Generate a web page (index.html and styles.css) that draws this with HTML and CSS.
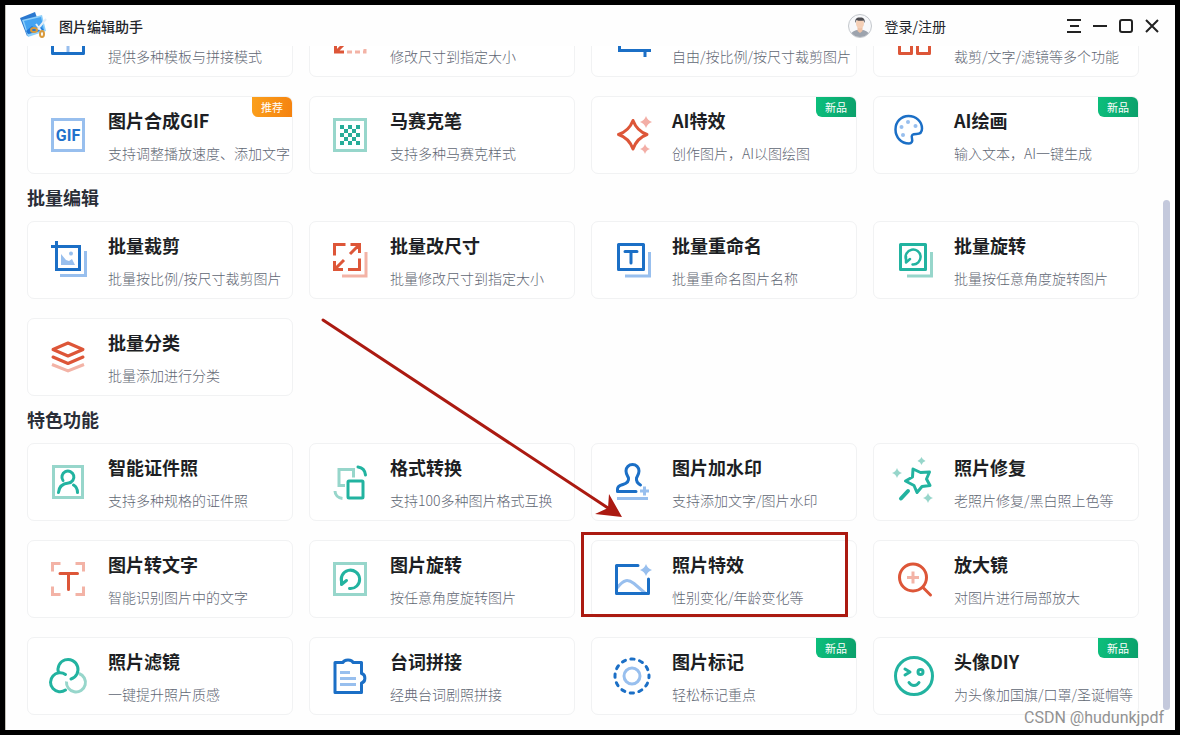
FILE: index.html
```html
<!DOCTYPE html>
<html lang="zh-CN">
<head>
<meta charset="utf-8">
<title>图片编辑助手</title>
<link rel="stylesheet" href="styles.css">
</head>
<body>
<div class="window">
  <header class="titlebar">
    <svg class="logo" viewBox="0 0 28 28" aria-hidden="true">
      <path fill="#2a78cf" d="M0 6L15 0l6 17L7 24z"/>
      <path fill="#8fd0fa" d="M2 8L22 3l4 16L8 25z"/>
      <path fill="#43a3f2" d="M4 9L21 5l3 13L8 22z"/>
      <path fill="#1f77d6" d="M6 19l6-5 4 3 3-4 5 5L8 22z"/>
      <path stroke="#e4edf5" stroke-width="2" d="M26 7l-9 11M16 12l6 8"/>
      <g fill="none" stroke="#d99a3c" stroke-width="2"><ellipse cx="14" cy="18" rx="3" ry="2"/><ellipse cx="22" cy="22" rx="2" ry="3"/></g>
    </svg>
    <h1 class="app-name">图片编辑助手</h1>
    <button class="login" type="button">
      <svg class="avatar" viewBox="0 0 24 24" aria-hidden="true">
        <clipPath id="face"><circle cx="12" cy="12" r="11"/></clipPath>
        <circle cx="12" cy="12" r="11.5" fill="#f7f8fa" stroke="#c3c7cc"/>
        <g clip-path="url(#face)"><path fill="#9da3ad" d="M2 24c0-6 4-7 7-8h6c3 1 7 2 7 8z"/><path fill="#eec2a6" d="M9.500 13h5v4l-2.500 2-2.500-2z"/></g>
        <ellipse cx="12" cy="9.500" rx="4" ry="5" fill="#f4cfb6"/>
        <path fill="#4b4b50" d="M7.500 9c-1-5 2-6 5-5.500 3 0 5 2 4 5.500l-1-2.500c-2 .5-5 .5-7-.5z"/>
      </svg>
      <span>登录/注册</span>
    </button>
    <nav class="controls">
      <button type="button" aria-label="菜单"><svg viewBox="0 0 16 16"><path d="M1 2h14M4 8h9M1 14h14"/></svg></button>
      <button type="button" aria-label="最小化"><svg viewBox="0 0 16 16"><path d="M1 8h14"/></svg></button>
      <button type="button" aria-label="最大化"><svg viewBox="0 0 16 16"><rect x="2" y="2" width="12" height="12" rx="2"/></svg></button>
      <button type="button" aria-label="关闭"><svg viewBox="0 0 16 16"><path d="M2 2l12 12M14 2L2 14"/></svg></button>
    </nav>
  </header>

  <main class="content">
    <section class="group">
      <button class="card untitled" type="button">
        <svg class="icon" viewBox="0 0 44 44"><path class="blue soft" d="M22 12v24"/><path class="blue" d="M6.500 10V37.500H37.500V10z"/></svg>
        <span class="text"><span class="desc">提供多种模板与拼接模式</span></span>
      </button>
      <button class="card untitled" type="button">
        <svg class="icon" viewBox="0 0 44 44"><path class="red sharp" d="M7.500 27v9H16M8 36l8-8"/><path class="red soft" stroke-dasharray="5 3" d="M19 36h18V26"/></svg>
        <span class="text"><span class="desc">修改尺寸到指定大小</span></span>
      </button>
      <button class="card untitled" type="button">
        <svg class="icon" viewBox="0 0 44 44"><path class="blue sharp" d="M9.500 4V34.500H41M35 34v7"/></svg>
        <span class="text"><span class="desc">自由/按比例/按尺寸裁剪图片</span></span>
      </button>
      <button class="card untitled" type="button">
        <svg class="icon" viewBox="0 0 44 44"><path class="red" d="M7.500 22v15.500h12V22M25.500 22v15.500h12V22"/></svg>
        <span class="text"><span class="desc">裁剪/文字/滤镜等多个功能</span></span>
      </button>
      <button class="card" type="button">
        <svg class="icon" viewBox="0 0 44 44"><rect class="blue soft" x="6.500" y="6.500" width="31" height="31"/><text class="gif" x="22" y="28" text-anchor="middle">GIF</text></svg>
        <span class="text"><b class="name">图片合成GIF</b><span class="desc">支持调整播放速度、添加文字</span></span>
        <span class="badge hot">推荐</span>
      </button>
      <button class="card" type="button">
        <svg class="icon" viewBox="0 0 44 44"><rect class="teal soft" x="6.500" y="6.500" width="31" height="31"/><path class="fill-teal" d="M12 12h4v4h-4zM20 12h4v4h-4zM28 12h4v4h-4zM16 16h4v4h-4zM24 16h4v4h-4zM12 20h4v4h-4zM20 20h4v4h-4zM28 20h4v4h-4zM16 24h4v4h-4zM24 24h4v4h-4zM12 28h4v4h-4zM20 28h4v4h-4zM28 28h4v4h-4z"/></svg>
        <span class="text"><b class="name">马赛克笔</b><span class="desc">支持多种马赛克样式</span></span>
      </button>
      <button class="card" type="button">
        <svg class="icon" viewBox="0 0 44 44"><path class="red" d="M23 7.500Q27 18 37 21.500 27 25 23 36 19 25 8.500 21.500 19 18 23 7.500z"/><path class="fill-pink" d="M36 3q1.500 4.500 6 6-4.500 1.500-6 6-1.500-4.500-6-6 4.500-1.500 6-6zM35 31q1.200 3.800 5 5-3.800 1.200-5 5-1.200-3.800-5-5 3.800-1.200 5-5z"/></svg>
        <span class="text"><b class="name">AI特效</b><span class="desc">创作图片，AI以图绘图</span></span>
        <span class="badge">新品</span>
      </button>
      <button class="card" type="button">
        <svg class="icon" viewBox="0 0 44 44"><path class="blue thin" d="M17 30.500C9 30.500 3.500 24 3.500 16.500 3.500 9 9 3 16.500 3S30 8.500 30 15.500c0 4-2.500 5.500-5.500 5.500-4 0-5.500 1-4.500 4.500.8 3-.5 5-3 5z"/><g class="fill-blue-soft"><circle cx="9.500" cy="14" r="2"/><circle cx="16" cy="9" r="2"/><circle cx="23.500" cy="13" r="2"/><circle cx="11" cy="22" r="2"/></g></svg>
        <span class="text"><b class="name">AI绘画</b><span class="desc">输入文本，AI一键生成</span></span>
        <span class="badge">新品</span>
      </button>
    </section>

    <h2 class="heading">批量编辑</h2>
    <section class="group">
      <button class="card" type="button">
        <svg class="icon" viewBox="0 0 44 44"><path class="blue sharp" d="M10.500 3v28.500h23v-23H5"/><path class="blue soft" d="M39.500 13v24.500H14"/><path class="fill-blue-soft" d="M15 16l5 6 3 1 3-2 3 6H15z"/><circle class="fill-blue-soft" cx="25" cy="15.500" r="2"/></svg>
        <span class="text"><b class="name">批量裁剪</b><span class="desc">批量按比例/按尺寸裁剪图片</span></span>
      </button>
      <button class="card" type="button">
        <svg class="icon" viewBox="0 0 44 44"><path class="red sharp" d="M6.500 17.500v-11h11M20 31.500h11.500v-11M22.500 6.500h9V15M31 7l-9 9M6.500 23v8.500H15M7 31l9-9"/><path class="red soft" d="M38 14v24H14"/></svg>
        <span class="text"><b class="name">批量改尺寸</b><span class="desc">批量修改尺寸到指定大小</span></span>
      </button>
      <button class="card" type="button">
        <svg class="icon" viewBox="0 0 44 44"><rect class="blue" x="8.500" y="6.500" width="25" height="25"/><path class="blue" d="M15 13.500h12M21 14v11"/><path class="blue soft" d="M39.500 14v24H15"/></svg>
        <span class="text"><b class="name">批量重命名</b><span class="desc">批量重命名图片名称</span></span>
      </button>
      <button class="card" type="button">
        <svg class="icon" viewBox="0 0 44 44"><rect class="teal" x="8.500" y="6.500" width="25" height="25"/><path class="teal thin" d="M20.500 26.500a7.500 7.500 0 1 0-6.500-5M14 18.500v6l4-3.500"/><path class="teal soft" d="M39.500 14v24H15"/></svg>
        <span class="text"><b class="name">批量旋转</b><span class="desc">批量按任意角度旋转图片</span></span>
      </button>
      <button class="card" type="button">
        <svg class="icon" viewBox="0 0 44 44"><path class="red" d="M22 8l15 6.500L22 21 7 14.500zM7 22l15 6.500L37 22"/><path class="red soft" d="M6 29.500L22 36l16-6.500"/></svg>
        <span class="text"><b class="name">批量分类</b><span class="desc">批量添加进行分类</span></span>
      </button>
    </section>

    <h2 class="heading">特色功能</h2>
    <section class="group">
      <button class="card" type="button">
        <svg class="icon" viewBox="0 0 44 44"><rect class="teal soft" x="7.500" y="6.500" width="29" height="31"/><path class="teal" d="M17 20.500a6 6 0 1 1 5.500 2.500C17 23.500 13 26.500 12.500 32.500M27.500 25c2.500 1.500 4 4 4 7.500"/></svg>
        <span class="text"><b class="name">智能证件照</b><span class="desc">支持多种规格的证件照</span></span>
      </button>
      <button class="card" type="button">
        <svg class="icon" viewBox="0 0 44 44"><path class="teal soft" d="M17 25.500h-6v-16h14.500v8M7 31c0 4 3 7 7.500 7.500"/><rect class="teal" x="20" y="21" width="15" height="17" rx="1"/><path class="teal" d="M30 7c4 .5 7 3.500 7.500 8"/></svg>
        <span class="text"><b class="name">格式转换</b><span class="desc">支持100多种图片格式互换</span></span>
      </button>
      <button class="card" type="button">
        <svg class="icon" viewBox="0 0 44 44"><path class="blue" d="M26 31.500H7.500V29c0-3 2.500-3.500 5.500-4.500 5-1.500 6-3.500 5.500-6.500-.8-2-2.500-4-2.500-7a6.500 6.500 0 0 1 13 0c0 3-1.500 5-2.500 7-.5 3 .5 5 4 7"/><path class="blue soft" d="M34.500 26.500v9M30 31h9M7 38.500h31"/></svg>
        <span class="text"><b class="name">图片加水印</b><span class="desc">支持添加文字/图片水印</span></span>
      </button>
      <button class="card" type="button">
        <svg class="icon" viewBox="0 0 44 44"><path class="teal" d="M21 9l7.500 3.500L37.500 12 34.500 19l3.500 6.500-8 1-5 6-3-7-8.500-4.500 7-4z"/><path class="teal thick" d="M16 31l-7 7.500"/><path class="fill-teal-soft" d="M5 8q1.200 3.800 5 5-3.800 1.200-5 5-1.200-3.800-5-5 3.800-1.200 5-5zM29.500-3q.9 2.800 4 4-3.100.9-4 4-.9-3.100-4-4 3.100-1.200 4-4zM36 33q1.200 3.800 5 5-3.800 1.200-5 5-1.200-3.800-5-5 3.800-1.200 5-5z"/></svg>
        <span class="text"><b class="name">照片修复</b><span class="desc">老照片修复/黑白照上色等</span></span>
      </button>
      <button class="card" type="button">
        <svg class="icon" viewBox="0 0 44 44"><path class="red soft" d="M6.500 14.500v-8h8M29.500 6.500h8v8M37.500 29.500v8h-8M14.500 37.500h-8v-8"/><path class="red" d="M14 16.500h17.500M22.500 17v15.500"/></svg>
        <span class="text"><b class="name">图片转文字</b><span class="desc">智能识别图片中的文字</span></span>
      </button>
      <button class="card" type="button">
        <svg class="icon" viewBox="0 0 44 44"><rect class="teal soft" x="6.500" y="6.500" width="31" height="31"/><path class="teal" d="M21.500 31.500a9.200 9.200 0 1 0-7.500-5.500M13.500 21v6.500l5-4"/></svg>
        <span class="text"><b class="name">图片旋转</b><span class="desc">按任意角度旋转图片</span></span>
      </button>
      <button class="card" type="button">
        <svg class="icon" viewBox="0 0 44 44"><path class="blue soft" d="M7 31c7-9 11-9 17-4.500l11 9.500"/><path class="blue" d="M28 8.500H6.500v28H38.500V22"/><path class="fill-blue-soft" d="M36 7q1.500 4.500 6 6-4.500 1.500-6 6-1.500-4.500-6-6 4.500-1.500 6-6z"/></svg>
        <span class="text"><b class="name">照片特效</b><span class="desc">性别变化/年龄变化等</span></span>
        <span class="callout"></span>
      </button>
      <button class="card" type="button">
        <svg class="icon" viewBox="0 0 44 44"><circle class="red" cx="21" cy="20.500" r="13.500"/><path class="red" d="M31 30.500l7.500 7.500"/><path class="red soft" d="M21 14.500v12M15 20.500h12"/></svg>
        <span class="text"><b class="name">放大镜</b><span class="desc">对图片进行局部放大</span></span>
      </button>
      <button class="card" type="button">
        <svg class="icon" viewBox="0 0 44 44"><path class="teal soft" d="M33 19.500a9.500 9.500 0 1 1-12.500 8"/><path class="teal" d="M12.500 18.500a10 10 0 1 1 12.500 6.500M19.500 20.500a9.500 9.500 0 1 0 0 15.500"/></svg>
        <span class="text"><b class="name">照片滤镜</b><span class="desc">一键提升照片质感</span></span>
      </button>
      <button class="card" type="button">
        <svg class="icon" viewBox="0 0 44 44"><path class="blue" d="M7 8.500h8c1-3.500 9-3.500 10 0h8.500v11c4.500 1 4.500 8.500 0 9.500v9.500H7z"/><path class="blue soft" d="M12 18.500h10M12 24.500h16M12 30.500h16"/></svg>
        <span class="text"><b class="name">台词拼接</b><span class="desc">经典台词剧照拼接</span></span>
      </button>
      <button class="card" type="button">
        <svg class="icon" viewBox="0 0 44 44"><circle class="blue" cx="22" cy="22" r="17" stroke-dasharray="3.400 5.500" stroke-dashoffset="1.700"/><circle class="blue soft" cx="22" cy="22" r="8"/></svg>
        <span class="text"><b class="name">图片标记</b><span class="desc">轻松标记重点</span></span>
        <span class="badge">新品</span>
      </button>
      <button class="card" type="button">
        <svg class="icon" viewBox="0 0 44 44"><circle class="teal" cx="22" cy="22" r="18.500"/><path class="teal" d="M13 15l5 3-5 3M17 28.500c2.500 4 7.500 4 10 0"/><circle class="teal" cx="28.500" cy="18" r="2.500"/></svg>
        <span class="text"><b class="name">头像DIY</b><span class="desc">为头像加国旗/口罩/圣诞帽等</span></span>
        <span class="badge">新品</span>
      </button>
    </section>
    <div class="scrollbar"></div>
  </main>
</div>
<svg class="arrow" aria-hidden="true"><path stroke="#ab1a11" stroke-width="3" stroke-linecap="round" d="M323 320L608 508"/><path fill="#ab1a11" d="M622 517l-27-3 13-6 1-14z"/></svg>
<p class="watermark">CSDN @hudunkjpdf</p>
</body>
</html>
```
FILE: styles.css
```css
* {
  box-sizing: border-box;
}

body {
  margin: 0;
  height: 100vh;
  padding: 5px;
  background: #000;
  position: relative;
  overflow: hidden;
  font-family: "Noto Sans CJK SC", sans-serif;
  font-size: 14px;
}

button {
  margin: 0;
  padding: 0;
  border: 0;
  background: none;
  font: inherit;
  color: inherit;
  text-align: left;
}

.window {
  height: 100%;
  display: flex;
  flex-direction: column;
  background: #fefefe;
  border-left: 1px solid #c4c1ba;
}

.titlebar {
  flex: none;
  height: 41px;
  display: flex;
  align-items: center;
  padding: 0 10px 0 14px;
  color: #22252b;
}

.logo {
  width: 28px;
  height: 28px;
}

.app-name {
  margin: 0 auto 0 11px;
  font-size: 14px;
  font-weight: 500;
  line-height: 20px;
}

.login {
  display: flex;
  align-items: center;
  gap: 13px;
  margin-right: 115px;
  line-height: 20px;
}

.avatar {
  width: 24px;
  height: 24px;
}

.controls {
  display: flex;
}

.controls button {
  width: 26px;
  height: 26px;
  display: grid;
  place-items: center;
}

.controls svg {
  width: 16px;
  height: 16px;
  fill: none;
  stroke: #222;
  stroke-width: 2;
}

.content {
  flex: 1;
  min-height: 0;
  position: relative;
  display: flex;
  flex-direction: column;
  justify-content: flex-end;
  overflow: hidden;
  padding: 0 36px 15px 21px;
}

.group {
  display: grid;
  grid-template-columns: repeat(4, 1fr);
  gap: 19px 16px;
}

.heading {
  margin: 0;
  padding: 11px 0 12px;
  font-size: 18px;
  line-height: 24px;
  font-weight: 700;
  color: #2a2e38;
}

.card {
  position: relative;
  display: flex;
  align-items: center;
  gap: 18px;
  height: 78px;
  padding-left: 18px;
  border: 1px solid #f1f2f3;
  border-radius: 7px;
  background: #fff;
  white-space: nowrap;
}

.icon {
  flex: none;
  width: 44px;
  height: 44px;
  overflow: visible;
}

.text {
  display: flex;
  flex-direction: column;
  gap: 11px;
}

.untitled .text {
  padding-top: 35px;
}

.name {
  font-size: 18px;
  line-height: 24px;
  font-weight: 700;
  color: #1d1f24;
}

.desc {
  line-height: 20px;
  font-weight: 300;
  color: #5f6774;
}

.badge {
  position: absolute;
  top: 0;
  right: 0;
  width: 40px;
  height: 20px;
  border-radius: 0 6px 0 6px;
  background: linear-gradient(100deg, #0cbf7c, #0ba06b);
  color: #fff;
  font-size: 11px;
  line-height: 20px;
  text-align: center;
}

.badge.hot {
  background: linear-gradient(100deg, #fba01c, #f5820f);
}

.blue,
.red,
.teal {
  fill: none;
  stroke-width: 3;
  stroke-linecap: round;
  stroke-linejoin: round;
}

.blue { stroke: #1b6fc6; }
.red { stroke: #dd5638; }
.teal { stroke: #22b3a0; }
.blue.soft { stroke: #98bfee; }
.red.soft { stroke: #f3b3a6; }
.teal.soft { stroke: #97d6cb; }
.soft,
.sharp {
  stroke-linecap: butt;
  stroke-linejoin: miter;
}
.thin { stroke-width: 2.5; }
.thick { stroke-width: 4; }
.fill-teal { fill: #27ac98; }
.fill-pink { fill: #f3aea6; }
.fill-blue-soft { fill: #98bfee; }
.fill-teal-soft { fill: #97d6cb; }

.gif {
  font-family: Roboto, sans-serif;
  font-size: 16px;
  font-weight: 700;
  fill: #2372cc;
}

.callout {
  position: absolute;
  top: -9px;
  right: 8px;
  bottom: 0;
  left: -11px;
  border: 3px solid #ab1a11;
}

.scrollbar {
  position: absolute;
  top: 154px;
  right: 5px;
  bottom: 20px;
  width: 7px;
  border-radius: 4px;
  background: #c4c9dc;
}

.arrow {
  position: absolute;
  top: 0;
  left: 0;
  width: 100%;
  height: 100%;
  pointer-events: none;
}

.watermark {
  position: absolute;
  right: 16px;
  bottom: 7px;
  margin: 0;
  font-family: Roboto, sans-serif;
  font-size: 16px;
  line-height: 20px;
  color: #929292;
}
```
